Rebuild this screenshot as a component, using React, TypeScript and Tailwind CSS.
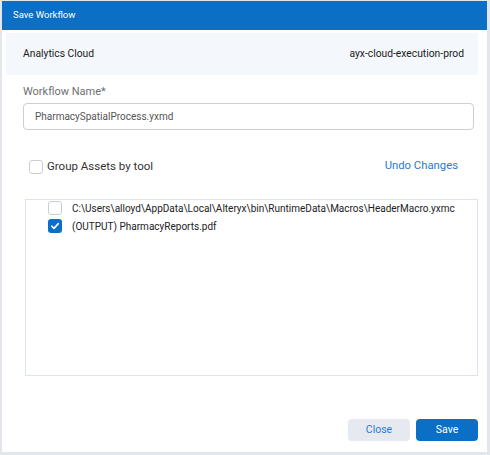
import React from "react";

function Check({ checked }: { checked?: boolean }) {
  return checked ? (
    <span className="flex h-[14px] w-[14px] shrink-0 items-center justify-center rounded-[3px] bg-[#0b6fc6]">
      <svg width="10" height="10" viewBox="0 0 10 10" fill="none">
        <path d="M1.8 5.2 L4 7.4 L8.3 2.6" stroke="white" strokeWidth="1.6" strokeLinecap="round" strokeLinejoin="round" />
      </svg>
    </span>
  ) : (
    <span className="block h-[14px] w-[14px] shrink-0 rounded-[3px] border border-[#c9ced6] bg-white" />
  );
}

export default function App() {
  return (
    <div
      className="flex h-[455px] w-[490px] flex-col bg-[#e2e6ed] pb-[3px] pl-[2px] pr-[3px] pt-[1px]"
      style={{ fontFamily: 'Roboto, "Open Sans", sans-serif' }}
    >
      <div className="flex h-[29px] shrink-0 items-center bg-[#0b6fc6] pl-[11px] text-[9.5px] text-white">
        Save Workflow
      </div>
      <div className="flex flex-1 flex-col bg-white pl-[4px] pr-[9px] pt-[3px]">
        <div className="flex h-[42px] items-center justify-between bg-[#f4f7fb] pl-[17px] pr-[14px] text-[10.3px] text-[#1a1a1a]">
          <span>Analytics Cloud</span>
          <span>ayx-cloud-execution-prod</span>
        </div>
        <div className="pl-[17px] pr-[4px] pt-[8px]">
          <div className="text-[11px] leading-[18px] text-[#6f6f6f]">Workflow Name*</div>
          <div className="mt-[2px] flex h-[27px] items-center rounded-[4px] border border-[#cfcfcf] pl-[11px] text-[10px] text-[#555]">
            PharmacySpatialProcess.yxmd
          </div>
        </div>
        <div className="flex items-center justify-between pl-[23px] pr-[20px] pt-[28px]">
          <label className="flex items-center gap-[4px] text-[11.5px] text-[#333]">
            <Check />
            <span>Group Assets by tool</span>
          </label>
          <span className="text-[11.3px] text-[#2a7ad5]">Undo Changes</span>
        </div>
        <div className="ml-[19px] mt-[24px] flex h-[177px] flex-col border border-[#dbe4f0] pl-[22px] text-[10px] text-[#222]">
          <div className="flex h-[16px] items-center gap-[10px]">
            <Check />
            <span className="whitespace-nowrap">C:\Users\alloyd\AppData\Local\Alteryx\bin\RuntimeData\Macros\HeaderMacro.yxmc</span>
          </div>
          <div className="mt-[2px] flex h-[16px] items-center gap-[10px]">
            <Check checked />
            <span>(OUTPUT) PharmacyReports.pdf</span>
          </div>
        </div>
        <div className="mt-[43px] flex justify-end gap-[6px]">
          <button className="h-[22px] w-[62px] rounded-[4px] bg-[#e6eaf0] text-[10.5px] text-[#2a7ad5]">Close</button>
          <button className="h-[22px] w-[62px] rounded-[4px] bg-[#0b6fc6] text-[10.5px] text-white">Save</button>
        </div>
      </div>
    </div>
  );
}
